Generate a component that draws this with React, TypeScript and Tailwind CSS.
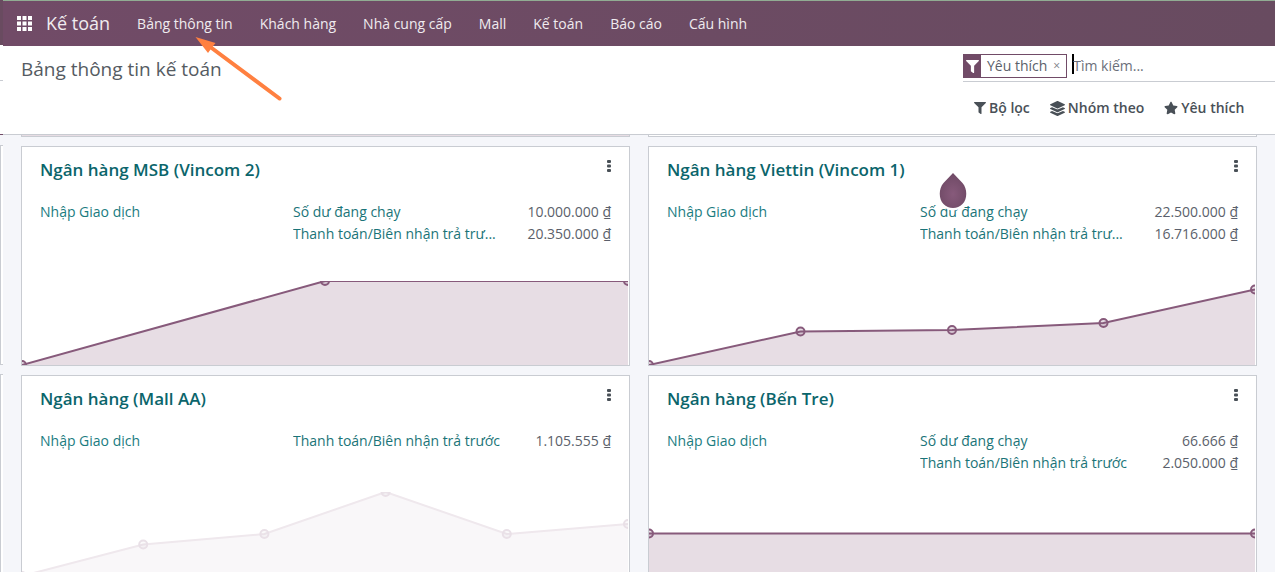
import React from "react";
import { FaFilter, FaLayerGroup, FaStar } from "react-icons/fa";

type Point = [number, number];

interface Journal {
  name: string;
  rows: { label: string; amount: string }[];
  points: Point[];
  sample?: boolean;
}

const CHART_HEIGHT = 84;

// Points are [percent of the width, pixels from the top of the chart].
const journals: Journal[] = [
  {
    name: "Ngân hàng MSB (Vincom 2)",
    rows: [
      { label: "Số dư đang chạy", amount: "10.000.000 ₫" },
      { label: "Thanh toán/Biên nhận trả trư...", amount: "20.350.000 ₫" },
    ],
    points: [[0, 84], [50, 0], [100, 0]],
  },
  {
    name: "Ngân hàng Viettin (Vincom 1)",
    rows: [
      { label: "Số dư đang chạy", amount: "22.500.000 ₫" },
      { label: "Thanh toán/Biên nhận trả trư...", amount: "16.716.000 ₫" },
    ],
    points: [[0, 84], [25, 50.5], [50, 49], [75, 42], [100, 8.5]],
  },
  {
    name: "Ngân hàng (Mall AA)",
    rows: [{ label: "Thanh toán/Biên nhận trả trước", amount: "1.105.555 ₫" }],
    points: [[0, 84], [20, 52.5], [40, 42], [60, 0], [80, 42], [100, 32]],
    sample: true,
  },
  {
    name: "Ngân hàng (Bến Tre)",
    rows: [
      { label: "Số dư đang chạy", amount: "66.666 ₫" },
      { label: "Thanh toán/Biên nhận trả trước", amount: "2.050.000 ₫" },
    ],
    points: [[0, 23.5], [100, 23.5]],
  },
];

const menu = ["Bảng thông tin", "Khách hàng", "Nhà cung cấp", "Mall", "Kế toán", "Báo cáo", "Cấu hình"];

function Chart({ points, sample }: { points: Point[]; sample?: boolean }) {
  const line = points.map((p) => p.join(",")).join(" ");
  const area = `0,${CHART_HEIGHT} ${line} 100,${CHART_HEIGHT}`;
  return (
    <div className="pr-px">
      <svg className="block h-[84px] w-full" aria-hidden="true">
        <svg width="100%" height={CHART_HEIGHT} viewBox={`0 0 100 ${CHART_HEIGHT}`} preserveAspectRatio="none">
          <polygon points={area} fill={sample ? "#f9f7f9" : "#e7dde4"} />
          <polyline
            points={line}
            fill="none"
            stroke={sample ? "#efe8ed" : "#875a7b"}
            strokeWidth="2"
            vectorEffect="non-scaling-stroke"
          />
        </svg>
        {points.map(([x, y]) => (
          <circle
            key={x}
            cx={`${x}%`}
            cy={y}
            r="4"
            fill="#875a7b"
            fillOpacity={sample ? 0.04 : 0.2}
            stroke={sample ? "#e9e0e7" : "#875a7b"}
            strokeWidth="2"
          />
        ))}
      </svg>
    </div>
  );
}

function JournalCard({ journal, marker }: { journal: Journal; marker?: boolean }) {
  return (
    <article className="relative self-start border border-[#c9ccd2] bg-white">
      <div className="flex items-start justify-between px-[18px] pt-[11px]">
        <h2 className="text-[17px] leading-6 font-semibold text-[#0b656b]">
          <a href="#journal">{journal.name}</a>
        </h2>
        <button type="button" aria-label="Tùy chọn" className="pt-[2px] text-[#495057]">
          <svg width="4" height="12" viewBox="0 0 4 12" fill="currentColor">
            <rect width="4" height="3" rx="1" />
            <rect y="4.5" width="4" height="3" rx="1" />
            <rect y="9" width="4" height="3" rx="1" />
          </svg>
        </button>
      </div>
      <div className="mt-[19px] grid min-h-[62px] grid-cols-[253fr_318fr] px-[18px] pb-9 text-sm leading-[22px]">
        <div>
          <a href="#transactions" className="text-[#1a7c7f]">Nhập Giao dịch</a>
        </div>
        <div className="min-w-0">
          {journal.rows.map((row) => (
            <div key={row.label} className="flex justify-between gap-6">
              <a href="#entries" className="truncate text-[#1a7478]">{row.label}</a>
              <span className="whitespace-nowrap text-[#5b5f6b]">{row.amount}</span>
            </div>
          ))}
        </div>
      </div>
      <Chart points={journal.points} sample={journal.sample} />
      {marker && (
        <svg className="absolute top-[26px] left-1/2 -ml-[14px]" width="28" height="40" viewBox="0 0 28 40" aria-hidden="true">
          <defs>
            <radialGradient id="drop" cx="50%" cy="60%" r="55%">
              <stop offset="0" stopColor="#875a7b" />
              <stop offset="1" stopColor="#714b67" />
            </radialGradient>
          </defs>
          <circle cx="14" cy="24" r="13.5" fill="#fff" />
          <path d="M14 0 L23.5 10 C28.500 15.500 28.500 26 23.5 31 A13.3 13.3 0 0 1 4.500 31 C-0.500 26 -0.500 15.500 4.500 10 Z" fill="url(#drop)" />
        </svg>
      )}
    </article>
  );
}

export default function App() {
  return (
    <div className="relative flex h-screen overflow-hidden bg-[#f5f6fa] font-['Open_Sans','Noto_Sans',sans-serif]">
      <div className="flex w-[3px] shrink-0 flex-col" aria-hidden="true">
        <div className="h-[45px] bg-[#694b60]" />
        <div className="h-9 border-b border-[#c9ccd2] bg-white" />
        <div className="h-[54px] border-b border-[#714b67] bg-white" />
        <div className="mt-[10px] h-[220px] border-y border-l border-[#c9ccd2] bg-white" />
        <div className="mt-[9px] flex-1 border-t border-l border-[#c9ccd2] bg-white" />
      </div>
      <div className="flex min-w-0 flex-1 flex-col">
        <nav className="flex h-[46px] shrink-0 items-center border-t border-[#91ac93] bg-linear-to-r from-[#714b67] to-[#684b60] pl-[14px] text-[#f0ebef]">
          <button type="button" aria-label="Ứng dụng">
            <svg width="15" height="15" viewBox="0 0 15 15" fill="#fff">
              {[0, 5.5, 11].map((y) => [0, 5.5, 11].map((x) => <rect key={`${x}-${y}`} x={x} y={y} width="4" height="4" />))}
            </svg>
          </button>
          <a href="#home" className="ml-[14px] text-[18px]">Kế toán</a>
          <ul className="ml-[27px] flex gap-[27px] text-sm">
            {menu.map((item) => (
              <li key={item}><a href="#menu">{item}</a></li>
            ))}
          </ul>
        </nav>
        <header className="flex h-[89px] shrink-0 justify-between border-b border-[#c9ccd2] bg-white pl-[18px]">
          <h1 className="pt-[9px] text-[19px] leading-7 text-[#555b62]">Bảng thông tin kế toán</h1>
          <div className="w-[312px]">
            <div className="flex h-9 items-start border-b border-[#c9ccd2] pt-2 text-sm">
              <div className="flex h-6 shrink-0 items-center border border-[#714b67] text-[#5b5f6b]">
                <span className="flex h-full w-[17px] items-center justify-center bg-[#714b67] text-white">
                  <FaFilter size={13} />
                </span>
                <span className="pl-[6px]">Yêu thích</span>
                <button type="button" aria-label="Xóa bộ lọc" className="px-[6px] text-xs text-[#7d7d85]">×</button>
              </div>
              <span className="ml-[5px] h-5 w-[2px] shrink-0 bg-black" />
              <input
                aria-label="Tìm kiếm"
                placeholder="Tìm kiếm..."
                className="-ml-px h-[22px] min-w-0 flex-1 text-sm text-[#5b5f6b] outline-none placeholder:text-[#6b6f7a]"
              />
            </div>
            <div className="flex gap-5 pt-[15px] pl-[11px] text-sm leading-[22px] font-semibold text-[#495057]">
              <button type="button" className="flex items-center gap-[3px]"><FaFilter size={12} />Bộ lọc</button>
              <button type="button" className="flex items-center gap-[3px]"><FaLayerGroup size={15} />Nhóm theo</button>
              <button type="button" className="flex items-center gap-[3px]"><FaStar size={14} />Yêu thích</button>
            </div>
          </div>
        </header>
        <main className="grid min-h-0 flex-1 grid-cols-2 content-start gap-x-[18px] gap-y-[9px] overflow-hidden px-[18px]">
          <div className="h-[2px] border-x border-b border-[#c9ccd2] bg-[#e7dde4]" />
          <div className="h-[2px] border-x border-b border-[#c9ccd2] bg-white" />
          {journals.map((journal, i) => (
            <JournalCard key={journal.name} journal={journal} marker={i === 1} />
          ))}
        </main>
      </div>
      <svg className="pointer-events-none absolute top-9 left-[195px]" width="88" height="66" viewBox="0 0 88 66" aria-hidden="true">
        <path d="M14 10 L84.500 62.500" stroke="#ff8040" strokeWidth="4" strokeLinecap="round" />
        <path d="M0.500 1 L20.500 7 L17 11.500 L13 17 Z" fill="#ff8040" />
      </svg>
    </div>
  );
}
